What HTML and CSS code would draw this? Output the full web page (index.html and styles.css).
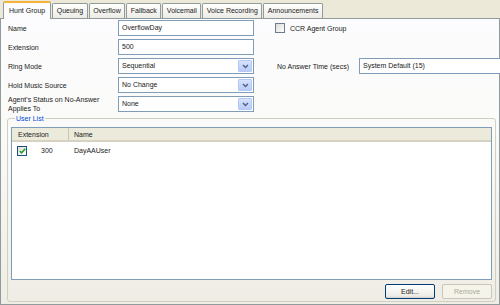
FILE: index.html
```html
<!DOCTYPE html>
<html lang="en">

<head>
    <meta charset="UTF-8">
    <title>Hunt Group</title>
    <link rel="stylesheet" href="styles.css">
</head>

<body>
    <div class="dialog">
        <div class="tabs">
            <div class="tab active">Hunt Group</div>
            <div class="tab">Queuing</div>
            <div class="tab">Overflow</div>
            <div class="tab">Fallback</div>
            <div class="tab">Voicemail</div>
            <div class="tab">Voice Recording</div>
            <div class="tab">Announcements</div>
        </div>

        <div class="page">
            <div class="form">
                <label class="lbl">Name</label>
                <div class="field">OverflowDay</div>
                <div class="check-wrap">
                    <span class="checkbox"></span>
                    <span>CCR Agent Group</span>
                </div>

                <label class="lbl">Extension</label>
                <div class="field">500</div>

                <label class="lbl">Ring Mode</label>
                <div class="field select">Sequential<span class="drop"><svg width="7" height="5" viewBox="0 0 7 5"><path d="M1 1 L3.5 3.5 L6 1" fill="none" stroke="#4d6185" stroke-width="1.4"/></svg></span></div>
                <label class="lbl lbl-right">No Answer Time (secs)</label>
                <div class="field wide">System Default (15)</div>

                <label class="lbl">Hold Music Source</label>
                <div class="field select">No Change<span class="drop"><svg width="7" height="5" viewBox="0 0 7 5"><path d="M1 1 L3.5 3.5 L6 1" fill="none" stroke="#4d6185" stroke-width="1.4"/></svg></span></div>

                <label class="lbl two-line">Agent's Status on No-Answer Applies To</label>
                <div class="field select">None<span class="drop"><svg width="7" height="5" viewBox="0 0 7 5"><path d="M1 1 L3.5 3.5 L6 1" fill="none" stroke="#4d6185" stroke-width="1.4"/></svg></span></div>
            </div>

            <fieldset class="group">
                <legend>User List</legend>
                <div class="list">
                    <div class="list-head">
                        <div class="col-ext">Extension</div>
                        <div class="col-name">Name</div>
                    </div>
                    <div class="list-row">
                        <div class="col-ext">
                            <span class="checkbox checked"><svg width="7" height="6" viewBox="0 0 7 6"><path d="M0.8 3 L2.6 4.8 L6.2 0.8" fill="none" stroke="#21a121" stroke-width="1.6"/></svg></span>
                            <span>300</span>
                        </div>
                        <div class="col-name">DayAAUser</div>
                    </div>
                </div>
                <div class="buttons">
                    <button class="btn">Edit...</button>
                    <button class="btn disabled">Remove</button>
                </div>
            </fieldset>
        </div>
    </div>
</body>

</html>
```

FILE: styles.css
```css
* {
    margin: 0;
    padding: 0;
    box-sizing: border-box;
}

body {
    font-family: 'Liberation Sans', Arial, sans-serif;
    font-size: 7px;
    color: #1a1a1a;
    background: #ece9d8;
    width: 500px;
    height: 305px;
    overflow: hidden;
}

.dialog {
    display: flex;
    flex-direction: column;
    height: 305px;
}

.tabs {
    display: flex;
    align-items: flex-end;
    height: 18px;
    padding-left: 3px;
    position: relative;
    z-index: 1;
}

.tab {
    height: 15px;
    padding: 0 3.5px;
    margin-right: 1px;
    line-height: 14px;
    border: 1px solid #919b9c;
    border-bottom: none;
    border-radius: 2px 2px 0 0;
    background: linear-gradient(#ffffff, #ecebe6);
    white-space: nowrap;
}

.tab.active {
    height: 18px;
    padding: 0 5px;
    line-height: 16px;
    background: #fcfcfe;
    border-top: 2px solid #f4b33c;
    margin-bottom: -1px;
}

.page {
    flex: 1;
    border: 1px solid #919b9c;
    background: linear-gradient(#fcfcfe 0%, #fafaf8 40%, #efede5 100%);
    padding: 1px 0 2px 5px;
    display: flex;
    flex-direction: column;
}

.form {
    display: grid;
    grid-template-columns: 110px 136px 21px 84px 1fr;
    grid-template-rows: 16px 16px 16px 16px 16px;
    row-gap: 3px;
    align-items: center;
    margin-left: 2px;
}

.lbl {
    grid-column: 1;
}

.lbl-right {
    grid-column: 4;
    padding-left: 2px;
}

.two-line {
    line-height: 9px;
}

.field {
    grid-column: 2;
    height: 16px;
    border: 1px solid #7f9db9;
    background: #fff;
    padding-left: 3px;
    line-height: 14px;
    position: relative;
}

.field.wide {
    grid-column: 5;
    margin-right: -4px;
}

.select {
    padding-right: 16px;
}

.drop {
    position: absolute;
    top: 1px;
    right: 1px;
    width: 14px;
    height: 12px;
    background: linear-gradient(#d6e2fd, #b9cbf7);
    border: 1px solid #b5c8f3;
    border-radius: 1px;
    display: flex;
    align-items: center;
    justify-content: center;
}

.check-wrap {
    grid-column: 4 / span 2;
    display: flex;
    align-items: center;
    gap: 5px;
}

.checkbox {
    width: 10px;
    height: 10px;
    border: 1px solid #6d7d8f;
    background: linear-gradient(135deg, #dcdcd7, #ffffff);
    display: inline-flex;
    align-items: center;
    justify-content: center;
}

.checkbox.checked {
    border-color: #1c5180;
}

.group {
    flex: 1;
    margin: 2px 3px 0 1px;
    border: 1px solid #d0d0bf;
    border-radius: 3px;
    padding: 0 3px 2px 3px;
    display: flex;
    flex-direction: column;
}

.group legend {
    color: #0046d5;
    padding: 0 1px;
    margin-left: 4px;
    line-height: 9px;
}

.list {
    flex: 1;
    margin-top: 4px;
    border: 1px solid #7f9db9;
    background: #fff;
}

.list-head {
    display: flex;
    height: 14px;
    line-height: 13px;
    background: #ebeadb;
    border-bottom: 2px solid #d6d2c2;
}

.list-head .col-ext {
    border-right: 1px solid #c7c5b2;
    padding-left: 6px;
}

.col-ext {
    width: 57px;
    display: flex;
    align-items: center;
}

.col-name {
    padding-left: 5px;
}

.list-row {
    display: flex;
    height: 14px;
    line-height: 14px;
    margin-top: 2px;
}

.list-row .col-ext {
    padding-left: 5px;
    gap: 14px;
}

.list-row .col-name {
    padding-left: 5px;
}

.buttons {
    display: flex;
    justify-content: flex-end;
    gap: 7px;
    padding-top: 4px;
}

.btn {
    width: 50px;
    height: 15px;
    font-family: inherit;
    font-size: 7px;
    color: #1a1a1a;
    border: 1px solid #003c74;
    border-radius: 2px;
    background: linear-gradient(#ffffff, #ecebe6 85%, #d6d0c5);
}

.btn.disabled {
    color: #aca899;
    border-color: #c9c7ba;
    background: #f5f4ea;
}
```
